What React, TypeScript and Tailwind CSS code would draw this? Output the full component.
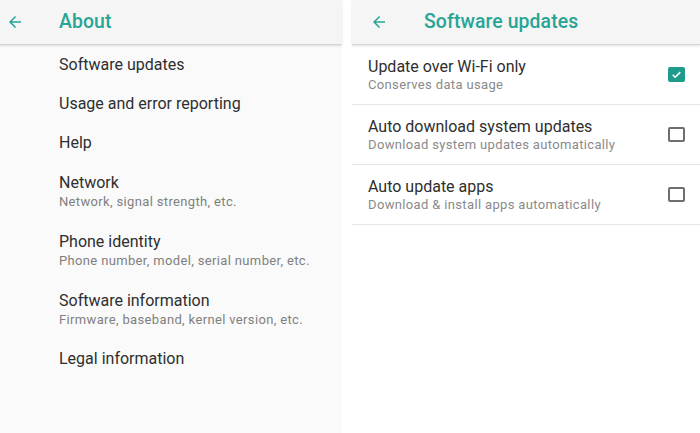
import type {ReactNode} from "react";

const font = {fontFamily: "Roboto, 'Noto Sans', Arial, sans-serif"};

function BackArrow() {
  return (
    <svg viewBox="0 0 24 24" className="w-[18px] h-[18px] fill-[#26a595]">
      <path d="M20 11H7.83l5.59-5.59L12 4l-8 8 8 8 1.41-1.41L7.83 13H20v-2z" />
    </svg>
  );
}

function Header({title, left, gap}: {title: string; left: string; gap: string}) {
  return (
    <div className={`h-[45px] shrink-0 flex items-center bg-[#f5f5f5] border-b border-[#d6d6d6] shadow-[0_1px_2px_rgba(0,0,0,0.12)] ${left}`}>
      <BackArrow />
      <span className={`${gap} text-[19.4px] font-medium text-[#26a595] tracking-[0.1px]`}>{title}</span>
    </div>
  );
}

function AboutItem({title, sub}: {title: string; sub?: string}) {
  return (
    <div className={`flex flex-col justify-center pl-[59px] ${sub ? "h-[59px]" : "h-[39px]"}`}>
      <div className="text-[16px] leading-[19px] text-[#2e2e2e]">{title}</div>
      {sub && <div className="text-[13px] leading-[19px] tracking-[0.35px] text-[#808080]">{sub}</div>}
    </div>
  );
}

function Checkbox({checked}: {checked?: boolean}) {
  if (checked) {
    return (
      <div className="w-[17px] h-[15px] rounded-[2px] bg-[#1f9b8b] flex items-center justify-center">
        <svg viewBox="0 0 24 24" className="w-[13px] h-[13px]">
          <path d="M5 12.5l4.5 4.5L19 7.5" stroke="white" strokeWidth="3" fill="none" />
        </svg>
      </div>
    );
  }
  return <div className="w-[17px] h-[15px] rounded-[2px] border-2 border-[#6e6e6e]" />;
}

function UpdateItem({title, sub, checked}: {title: string; sub: string; checked?: boolean}) {
  return (
    <div className="h-[60px] flex items-center justify-between pl-[16px] pr-[15px] border-b border-[#e6e6e6]">
      <div className="flex flex-col">
        <div className="text-[16px] leading-[19px] text-[#2e2e2e]">{title}</div>
        <div className="text-[13px] leading-[17px] tracking-[0.35px] text-[#8a8a8a]">{sub}</div>
      </div>
      <Checkbox checked={checked} />
    </div>
  );
}

function Panel({className, children}: {className: string; children: ReactNode}) {
  return <div className={`flex flex-col h-full ${className}`}>{children}</div>;
}

export default function App() {
  return (
    <div className="w-[700px] h-[433px] flex bg-white overflow-hidden" style={font}>
      <Panel className="w-[342px] bg-[#fafafa]">
        <Header title="About" left="pl-[6px]" gap="ml-[35px]" />
        <AboutItem title="Software updates" />
        <AboutItem title="Usage and error reporting" />
        <AboutItem title="Help" />
        <AboutItem title="Network" sub="Network, signal strength, etc." />
        <AboutItem title="Phone identity" sub="Phone number, model, serial number, etc." />
        <AboutItem title="Software information" sub="Firmware, baseband, kernel version, etc." />
        <AboutItem title="Legal information" />
      </Panel>
      <div className="w-[10px]" />
      <Panel className="flex-1 bg-white">
        <Header title="Software updates" left="pl-[18px]" gap="ml-[36px]" />
        <UpdateItem title="Update over Wi-Fi only" sub="Conserves data usage" checked />
        <UpdateItem title="Auto download system updates" sub="Download system updates automatically" />
        <UpdateItem title="Auto update apps" sub="Download & install apps automatically" />
      </Panel>
    </div>
  );
}
